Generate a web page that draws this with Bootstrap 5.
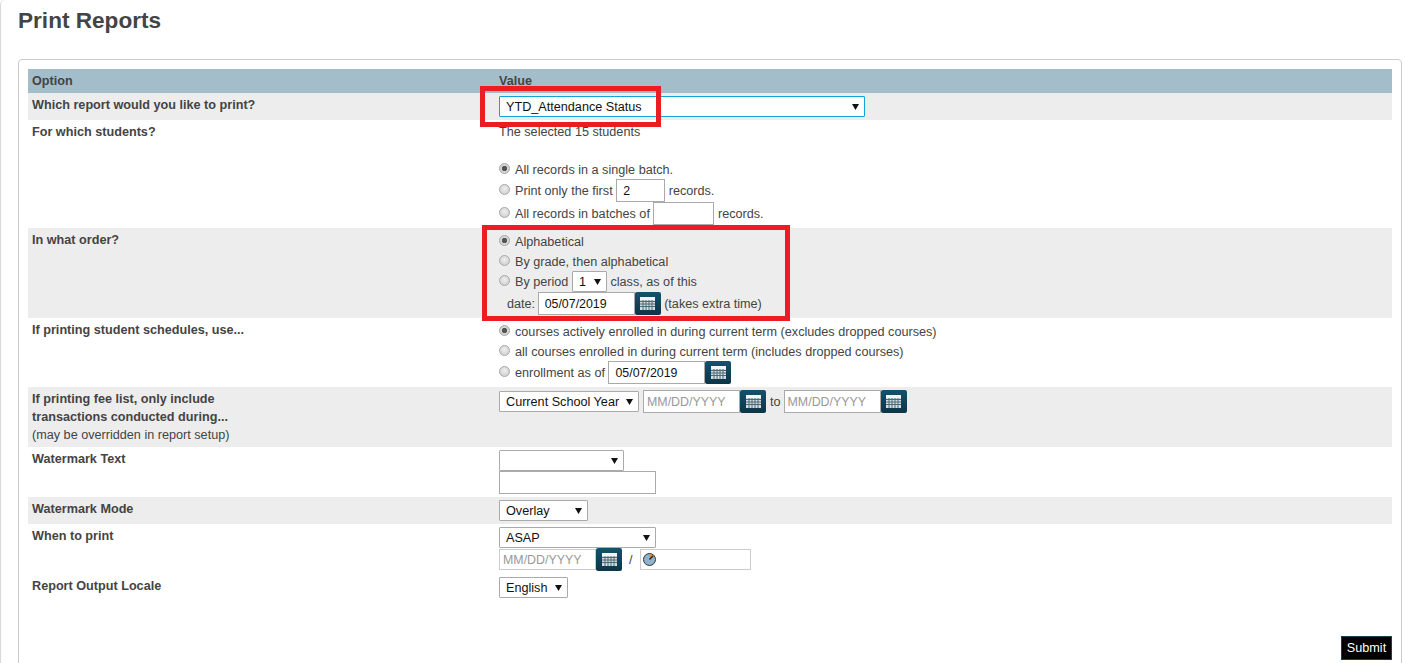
<!DOCTYPE html>
<html lang="en">
<head>
<meta charset="utf-8">
<title>Print Reports</title>
<link href="https://cdn.jsdelivr.net/npm/bootstrap@5.3.0/dist/css/bootstrap.min.css" rel="stylesheet">
<style>
html,body{height:663px;overflow:hidden;background:#fff}
body{font-family:"Liberation Sans",Arial,sans-serif;font-size:12.65px;line-height:18px;color:#444;position:relative}
.shell{border-left:1px solid #d8d8d8;border-top-left-radius:5px;height:663px;padding:0 3px 0 17px}
.ptitle{font-size:22.6px;font-weight:700;line-height:26px;margin:0;padding-top:8px;height:59px;color:#444}
.panel{border:1px solid #ccc;border-radius:4px;padding:9px;height:700px;width:1384px}
.rtable{width:1364px;table-layout:fixed;border-collapse:collapse}
.rtable th,.rtable td{vertical-align:top;padding:3px 4px 2px;font-weight:400}
.rtable .lab{width:467px;font-weight:700}
.rtable .lab span{font-weight:400}
.rtable .val{padding:3px 4px}
.rtable td.labtall{padding-bottom:3px}
.rtable thead th{background:#a3bdca;height:24px;font-weight:700}
.rtable tr.alt td{background:#ededed}
.ln{display:flex;align-items:center;height:20px;padding-top:1px;white-space:nowrap}
.ln.h21{height:21px;padding-top:0}.ln.h23{height:23px;padding-top:0}
.gapb{margin-top:18px}
.rd.form-check-input{width:11px;height:11px;margin:0 5px 2px 0;flex:none;border:1px solid #aaa;background:radial-gradient(circle at 50% 40%,#efefef,#c8c8c8);float:none}
.rd.form-check-input:checked{background:radial-gradient(circle,#555 0,#555 2.3px,#d8d8d8 3px,#c8c8c8 100%);border-color:#aaa}
.rd.form-check-input:focus{box-shadow:none}
.sel.form-select{font-size:12.65px;line-height:17px;height:21px;padding:1px 12px 0 6px;border:1px solid #aaa;border-radius:1px;color:#111;flex:none;background-image:url("data:image/svg+xml,%3Csvg xmlns='http://www.w3.org/2000/svg' width='7' height='6'%3E%3Cpath d='M0 0h7L3.5 6z' fill='%23111'/%3E%3C/svg%3E");background-position:right 5px center;background-size:7px 6px;background-color:#fff}
.sel.blue{border-color:#14a3d8}
.inp.form-control{font-size:12.4px;line-height:17px;height:23px;padding:0 6px;border:1px solid #aaa;border-radius:0;color:#111;flex:none;min-height:0;background:#fff}
.inp.form-control::placeholder{color:#999}
.inp.tight{padding:0 3px}
.inp.soft{border-color:#ccc;height:21px;padding-left:3px}
.inp.nudge{margin-left:-1px}
.calb.btn{width:26px;height:23px;padding:0;border:0;border-radius:2px;background:linear-gradient(#14526d,#0c3547);display:inline-flex;align-items:center;justify-content:center;flex:none}
.w35{width:35px}.w49{width:49px}.w61{width:61px}.w97{width:97px}.w111{width:111px}
.w366{width:366px}.w140{width:140px}.w125{width:125px}.w157{width:157px}.w89{width:89px}.w69{width:69px}
.tolab{margin-right:-1px}
.slash{margin:0 7px}
.clockic{left:3px;top:4px}
.subrow{padding-top:35px}
.subbtn.btn{background:#000;color:#fff;border:1px solid #1c3d4c;border-radius:0;font-size:12.65px;line-height:18px;padding:2px 0;width:51px;height:24px}
.redbox{position:absolute;border:5px solid #ed1c24;pointer-events:none}
.rb1{left:480px;top:86px;width:181px;height:41px}
.rb2{left:482px;top:225px;width:308px;height:96px}
</style>
</head>
<body>
<svg width="0" height="0" class="position-absolute">
<symbol id="cal" viewBox="0 0 15 13">
<path d="M0 0h15v13H0z" fill="#d5dde0"/>
<path d="M0 0h15v3H0z" fill="#f2f4f5"/>
<path d="M0 4.5h15M0 7h15M0 9.5h15M3 3v10M6 3v10M9 3v10M12 3v10" stroke="#4d6a78" stroke-width="1" fill="none"/>
</symbol>
</svg>
<div class="shell">
<h1 class="ptitle">Print Reports</h1>
<div class="panel">
<table class="rtable">
<thead><tr><th class="lab">Option</th><th>Value</th></tr></thead>
<tbody>
<tr class="alt"><td class="lab">Which report would you like to print?</td>
<td class="val"><select class="sel blue form-select w366"><option>YTD_Attendance Status</option></select></td></tr>
<tr><td class="lab">For which students?</td>
<td class="val">
<div>The selected 15 students</div>
<div class="ln gapb"><input class="rd form-check-input" type="radio" name="a" checked>All records in a single batch.</div>
<div class="ln h23"><input class="rd form-check-input" type="radio" name="a">Print only the first&nbsp;<input class="inp form-control w49" value="2">&nbsp;records.</div>
<div class="ln h23"><input class="rd form-check-input" type="radio" name="a">All records in batches of&nbsp;<input class="inp form-control w61">&nbsp;records.</div>
</td></tr>
<tr class="alt"><td class="lab">In what order?</td>
<td class="val">
<div class="ln"><input class="rd form-check-input" type="radio" name="b" checked>Alphabetical</div>
<div class="ln"><input class="rd form-check-input" type="radio" name="b">By grade, then alphabetical</div>
<div class="ln h21"><input class="rd form-check-input" type="radio" name="b">By period&nbsp;<select class="sel form-select w35"><option>1</option></select>&nbsp;class, as of this</div>
<div class="ln h23 ps-2">date:&nbsp;<input class="inp nudge form-control w97" value="05/07/2019"><button class="calb btn" type="button"><svg width="15" height="13"><use href="#cal"/></svg></button>&nbsp;(takes extra time)</div>
</td></tr>
<tr><td class="lab">If printing student schedules, use...</td>
<td class="val">
<div class="ln"><input class="rd form-check-input" type="radio" name="c" checked>courses actively enrolled in during current term (excludes dropped courses)</div>
<div class="ln"><input class="rd form-check-input" type="radio" name="c">all courses enrolled in during current term (includes dropped courses)</div>
<div class="ln h23"><input class="rd form-check-input" type="radio" name="c">enrollment as of&nbsp;<input class="inp form-control w97" value="05/07/2019"><button class="calb btn" type="button"><svg width="15" height="13"><use href="#cal"/></svg></button></div>
</td></tr>
<tr class="alt"><td class="lab labtall">If printing fee list, only include<br>transactions conducted during...<br><span>(may be overridden in report setup)</span></td>
<td class="val"><div class="ln h23 gap-1"><select class="sel form-select w140"><option>Current School Year</option></select><div class="d-flex"><input class="inp form-control tight w97" placeholder="MM/DD/YYYY"><button class="calb btn" type="button"><svg width="15" height="13"><use href="#cal"/></svg></button></div><span class="tolab">to</span><div class="d-flex"><input class="inp form-control tight w97" placeholder="MM/DD/YYYY"><button class="calb btn" type="button"><svg width="15" height="13"><use href="#cal"/></svg></button></div></div></td></tr>
<tr><td class="lab">Watermark Text</td>
<td class="val"><select class="sel form-select w125"><option></option></select><input class="inp form-control w157"></td></tr>
<tr class="alt"><td class="lab">Watermark Mode</td>
<td class="val"><select class="sel form-select w89"><option>Overlay</option></select></td></tr>
<tr><td class="lab">When to print</td>
<td class="val"><select class="sel form-select w157"><option>ASAP</option></select>
<div class="d-flex align-items-center"><input class="inp form-control tight soft w97" placeholder="MM/DD/YYYY"><button class="calb btn" type="button"><svg width="15" height="13"><use href="#cal"/></svg></button><span class="slash">/</span><span class="position-relative d-inline-flex"><input class="inp form-control soft w111"><svg class="position-absolute clockic" width="13" height="13" viewBox="0 0 13 13"><circle cx="6.5" cy="6.5" r="6" fill="#8fb2cf" stroke="#333"/><path d="M6.5 6.5V1.2A5.3 5.3 0 0 1 11 3.6z" fill="#e0872c"/><path d="M6.5 6.5L10 3" stroke="#222" stroke-width="1.2"/></svg></span></div></td></tr>
<tr><td class="lab">Report Output Locale</td>
<td class="val"><select class="sel form-select w69"><option>English</option></select></td></tr>
</tbody>
</table>
<div class="subrow d-flex justify-content-end"><button class="subbtn btn" type="button">Submit</button></div>
</div>
</div>
<div class="redbox rb1"></div>
<div class="redbox rb2"></div>
</body>
</html>
